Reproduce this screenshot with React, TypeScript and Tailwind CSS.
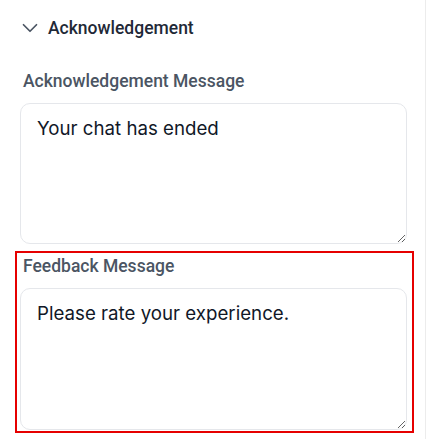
import React from "react";

export default function App() {
  return (
    <div className="w-[428px] h-[439px] bg-white overflow-hidden">
      <div className="w-[426px] h-full border-r border-[#ececec] pl-5 pr-[18px] pt-[14px]">
        <div className="flex items-center h-7">
          <svg
            width="26"
            height="26"
            viewBox="0 0 24 24"
            fill="none"
            stroke="#4b5563"
            strokeWidth="1.6"
            strokeLinecap="round"
            strokeLinejoin="round"
            className="ml-[-3px] mr-[5px]"
          >
            <path d="m6 9 6 6 6-6" />
          </svg>
          <span
            className="text-[17.5px] leading-7 font-medium text-[#1f2937]"
            style={{ fontFamily: "Roboto, 'Liberation Sans', sans-serif" }}
          >
            Acknowledgement
          </span>
        </div>

        <div className="mt-[27px]">
          <div
            className="pl-[3px] text-[17.5px] leading-6 font-medium text-[#4b5563]"
            style={{ fontFamily: "Roboto, 'Liberation Sans', sans-serif" }}
          >
            Acknowledgement Message
          </div>
          <textarea
            className="mt-[10px] block w-[387px] h-[141px] rounded-[10px] border border-[#e5e7eb] px-4 pt-[11px] pb-2 text-[18.7px] leading-7 text-[#111827] outline-none"
            style={{ fontFamily: "Inter, 'Noto Sans', sans-serif" }}
            defaultValue="Your chat has ended"
          />
        </div>

        <div className="relative mt-[10px]">
          <div
            className="pl-[3px] text-[17.5px] leading-6 font-medium text-[#4b5563]"
            style={{ fontFamily: "Roboto, 'Liberation Sans', sans-serif" }}
          >
            Feedback Message
          </div>
          <textarea
            className="mt-[10px] block w-[387px] h-[142px] rounded-[10px] border border-[#e5e7eb] px-4 pt-[11px] pb-2 text-[18.7px] leading-7 text-[#111827] outline-none"
            style={{ fontFamily: "Inter, 'Noto Sans', sans-serif" }}
            defaultValue="Please rate your experience."
          />
          <div className="pointer-events-none absolute -top-[3px] -bottom-[3px] -left-[5px] -right-[7px] border-2 border-[#e60000]" />
        </div>
      </div>
    </div>
  );
}
